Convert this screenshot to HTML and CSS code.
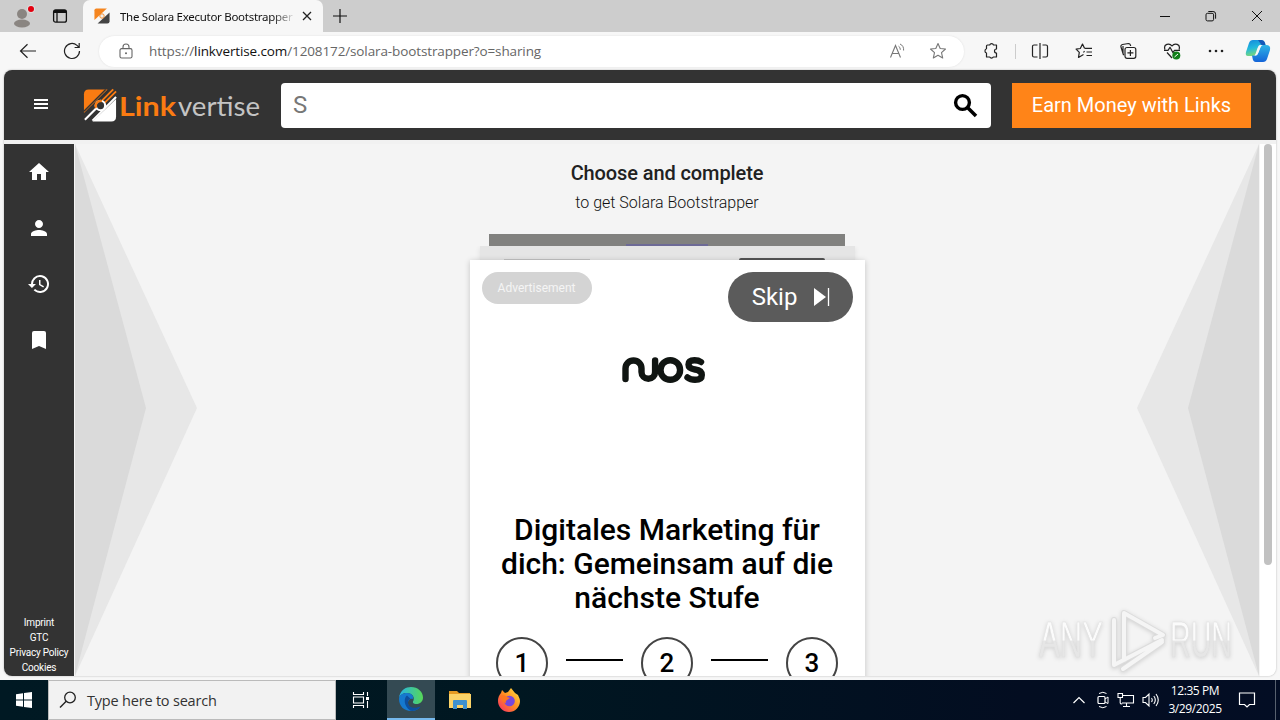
FILE: index.html
```html
<!DOCTYPE html>
<html lang="en">
<head>
<meta charset="utf-8">
<title>The Solara Executor Bootstrapper</title>
<link rel="stylesheet" href="styles.css">
</head>
<body>
<div class="desktop">
  <div class="tabbar">
    <div class="profile">
      <svg width="24" height="28" viewBox="0 0 24 28"><circle cx="11" cy="12" r="5" fill="#8a8581"/><ellipse cx="11" cy="21.500" rx="8" ry="4" fill="#8a8581"/><circle cx="20" cy="7" r="4" fill="#ddd"/><circle cx="20" cy="7" r="3" fill="#e3000f"/></svg>
    </div>
    <svg class="workspaces" width="16" height="16" viewBox="0 0 16 16"><rect x="1.600" y="1.800" width="12.800" height="12.400" rx="2" fill="none" stroke="#111" stroke-width="1.300"/><path d="M2 2h12v3H2z" fill="#111"/><path d="M5 5v9" stroke="#111" stroke-width="1.300"/></svg>
    <div class="tab">
      <svg width="16" height="16" viewBox="0 0 36 36"><use href="#lvmark-dark"/></svg>
      <span class="tab-title">The Solara Executor Bootstrapper</span>
      <svg class="tab-close" width="10" height="10" viewBox="0 0 10 10"><path d="M1 1l8 8M9 1L1 9" stroke="#222" stroke-width="1.300"/></svg>
    </div>
    <svg class="tab-new" width="14" height="14" viewBox="0 0 14 14"><path d="M7 0v14M0 7h14" stroke="#111" stroke-width="1.200"/></svg>
    <div class="window-controls">
      <svg width="12" height="12" viewBox="0 0 12 12"><path d="M1 6.500h10" stroke="#111"/></svg>
      <svg width="12" height="12" viewBox="0 0 12 12"><rect x="1" y="3.300" width="7.600" height="7.600" rx="1.500" fill="none" stroke="#111"/><path d="M3.300 1.500h4.600a2.600 2.600 0 0 1 2.700 2.700v4.500" fill="none" stroke="#111"/></svg>
      <svg width="12" height="12" viewBox="0 0 12 12"><path d="M1 1l10 10M11 1L1 11" stroke="#111"/></svg>
    </div>
  </div>

  <div class="toolbar">
    <svg class="nav-back" width="18" height="16" viewBox="0 0 18 16"><path d="M17 8H2M8.500 1.200L1.500 8l7 6.800" fill="none" stroke="#222" stroke-width="1.200"/></svg>
    <svg class="nav-reload" width="18" height="18" viewBox="0 0 18 18"><path d="M16.500 9A7.500 7.500 0 1 1 14 3.400L16 5.300M16.200 1v4.500h-4.600" fill="none" stroke="#222" stroke-width="1.200"/></svg>
    <div class="address">
      <svg class="lock" width="14" height="16" viewBox="0 0 14 16"><rect x="1" y="5.600" width="12" height="9.400" rx="1.600" fill="none" stroke="#666" stroke-width="1.100"/><path d="M4 5.500V4a3 3 0 0 1 6 0v1.500" fill="none" stroke="#666" stroke-width="1.100"/><circle cx="7" cy="10.300" r="1" fill="#666"/></svg>
      <span class="url">https://<b>linkvertise.com</b>/1208172/solara-bootstrapper?o=sharing</span>
      <svg width="18" height="16" viewBox="0 0 18 16"><path d="M1.500 14.500L6.500 2.500l5 12M3 10.500h7" fill="none" stroke="#777" stroke-width="1.100"/><path d="M9.500 3.200q2 1 1.800 3.600M11 1q4 1.800 3.600 6.500" fill="none" stroke="#777"/></svg>
      <svg class="star" width="18" height="18" viewBox="0 0 18 18"><path d="M9 1.500l2.200 5 5.300.5-4 3.600 1.200 5.400L9 13.200 4.300 16l1.200-5.400-4-3.600 5.300-.5z" fill="none" stroke="#777" stroke-width="1.100" stroke-linejoin="round"/></svg>
    </div>
    <svg class="ext" width="16" height="18" viewBox="0 0 16 18"><path d="M4.500 3h2.200a2 2 0 0 1 3.800 0H13.500v4a2 2 0 0 0 0 4v4h-3.200a2 2 0 0 1-3.600 0H3.500v-4a2.200 2.200 0 0 1 0-4.200V4q0-1 1-1z" fill="none" stroke="#222" stroke-width="1.200" stroke-linejoin="round"/></svg>
    <i class="sep"></i>
    <div class="tools">
      <svg width="18" height="18" viewBox="0 0 18 18"><path d="M6.500 3H3a1.500 1.500 0 0 0-1.500 1.500v9A1.500 1.500 0 0 0 3 15h3.500M11.500 3H15a1.500 1.500 0 0 1 1.500 1.500v9A1.500 1.500 0 0 1 15 15h-3.500M9 1v16" fill="none" stroke="#222" stroke-width="1.200"/></svg>
      <svg width="18" height="18" viewBox="0 0 18 18"><path d="M9.500 6.400H17M11.500 10H17M11.500 13.500H17" stroke="#222" stroke-width="1.200"/><path d="M9.500 6.300L7.500 2 5.300 6.500l-4.200.6 3.200 3.300-.8 5 5-2.900M9.500 9l-1 1.500" fill="none" stroke="#222" stroke-width="1.200" stroke-linejoin="round"/></svg>
      <svg width="18" height="18" viewBox="0 0 18 18"><rect x="6" y="5.500" width="10.800" height="10.800" rx="2" fill="none" stroke="#222" stroke-width="1.200"/><path d="M11.400 7.900v6M8.400 10.900h6M4.500 13L2 5Q1.500 3 3.500 2.500L9.500 1.500q1.700 0 2.200 2.500M4 4v6.500q0 2 1 2.500" fill="none" stroke="#222" stroke-width="1.200"/></svg>
      <svg width="18" height="18" viewBox="0 0 18 18"><path d="M2 7.500C0 2 6.500.5 9 4c2.500-3.500 9-2 7 3.500M1 8.300h4l2-3 3 5.500 1.500-2.500H17M4 10.500L9 16" fill="none" stroke="#222" stroke-width="1.200" stroke-linejoin="round"/><circle cx="13.300" cy="13.500" r="4" fill="#12801a"/><path d="M11.500 15l3.500-3" stroke="#fff"/></svg>
      <svg width="18" height="18" viewBox="0 0 18 18"><g fill="#222"><circle cx="3" cy="9" r="1.300"/><circle cx="9" cy="9" r="1.300"/><circle cx="15" cy="9" r="1.300"/></g></svg>
    </div>
    <svg class="copilot" width="26" height="24" viewBox="0 0 26 24"><defs><linearGradient id="cpa" x1="0" y1="0" x2="0.300" y2="1"><stop offset="0" stop-color="#1587dd"/><stop offset=".55" stop-color="#22b9dc"/><stop offset="1" stop-color="#7bd879"/></linearGradient><linearGradient id="cpb" x1="0" y1="0" x2="0" y2="1"><stop offset="0" stop-color="#2cb4e6"/><stop offset="1" stop-color="#1464d8"/></linearGradient></defs><path d="M8 1h8q3 0 4 3l.5 2h-5q-2 0-3 3l-2 6q-1 2-3 2H3q-3 0-2-4L4 4q1-3 4-3z" fill="url(#cpa)"/><path d="M18 6h3q5 0 4 5l-3 9q-1 3-4 3h-7q-3 0-3.500-4L7 16.500h3.500q2 0 3-3l2-5Q16 6 18 6z" fill="url(#cpb)"/><path d="M14 6.500h3q-2 1-2.500 3.500l-1.500 4q-1 3-3 3 1-1 1.500-3z" fill="#f7f7f7"/><path d="M13 1h3q3 0 4 3l.5 2h-4z" fill="#1457b8"/></svg>
  </div>

  <div class="page">
    <header class="site-header">
      <svg class="menu" width="14" height="10" viewBox="0 0 14 10"><path d="M0 1h14M0 5h14M0 9h14" stroke="#fff" stroke-width="2"/></svg>
      <svg class="logo" width="180" height="40" viewBox="0 0 180 40">
        <defs>
          <g id="lvmark"><path d="M6 1H26L1 26V6q0-5 5-5z" fill="#fa7b12"/><path d="M35 11v19q0 5-5 5H10z" fill="#fff"/><path d="M24 1L1 24" stroke="#333" stroke-width="1.500"/><path d="M32 1L14 19" stroke="#333" stroke-width="5"/><path d="M22 17L5 35" stroke="#333" stroke-width="5"/><path d="M32 1L18 15M35 3L22 16" stroke="#fa7b12" stroke-width="2"/><path d="M17 18L2 33M35 9L10 34" stroke="#fff" stroke-width="2.200"/><circle cx="18.500" cy="18" r="5" fill="#333" stroke="#fff" stroke-width="2.300"/><path d="M14 20.500a5 5 0 0 1 6-7" fill="none" stroke="#fa7b12" stroke-width="2.500"/></g>
          <g id="lvmark-dark"><path d="M5 1H29L1 27V5q0-4 4-4z" fill="#f5851f"/><path d="M35 10v20q0 5-5 5H8z" fill="#444"/><path d="M32 2L4 32" stroke="#f7f7f7" stroke-width="3"/><circle cx="18" cy="18" r="5" fill="#eee" stroke="#f5851f" stroke-width="2"/></g>
        </defs>
        <svg x="3" y="3" width="34" height="35" viewBox="0 0 36 36"><use href="#lvmark"/></svg>
        <text class="logo-link" x="39" y="30.500" textLength="57" lengthAdjust="spacingAndGlyphs">Link</text>
        <text class="logo-vertise" x="98" y="30.500" textLength="82" lengthAdjust="spacingAndGlyphs">vertise</text>
      </svg>
      <div class="search"><span>S</span>
        <svg width="25" height="25" viewBox="0 0 25 25"><circle cx="9.500" cy="9.500" r="6.900" fill="none" stroke="#000" stroke-width="3.400"/><path d="M14.500 14.500l8.500 8.500" stroke="#000" stroke-width="3.600"/></svg>
      </div>
      <div class="earn">Earn Money with Links</div>
    </header>

    <div class="body">
      <nav class="sidebar">
        <div class="side-icons">
          <svg width="24" height="24" viewBox="0 0 24 24"><path d="M10 20v-6h4v6h5v-8h3L12 3 2 12h3v8z"/></svg>
          <svg width="24" height="24" viewBox="0 0 24 24"><path d="M12 12c2.210 0 4-1.790 4-4s-1.790-4-4-4-4 1.790-4 4 1.790 4 4 4zm0 2c-2.670 0-8 1.340-8 4v2h16v-2c0-2.660-5.330-4-8-4z"/></svg>
          <svg width="24" height="24" viewBox="0 0 24 24"><path d="M13 3a9 9 0 0 0-9 9H1l3.890 3.890.07.14L9 12H6a7 7 0 1 1 2.060 4.940l-1.420 1.420A9 9 0 1 0 13 3zm-1 5v5l4.280 2.540.72-1.210-3.500-2.080V8z"/></svg>
          <svg width="24" height="24" viewBox="0 0 24 24"><path d="M17 3H7a2 2 0 0 0-2 2v16l7-3 7 3V5a2 2 0 0 0-2-2z"/></svg>
        </div>
        <div class="legal"><span>Imprint</span><span>GTC</span><span>Privacy Policy</span><span>Cookies</span></div>
      </nav>
      <main class="content">
        <svg class="arrow" width="123" height="532" viewBox="0 0 123 532"><path d="M0 0L122 264 0 532z" fill="#e7e7e7"/><path d="M0 0L71 264 0 532z" fill="#dadada"/></svg>
        <section class="offer">
          <h1>Choose and complete</h1>
          <p>to get Solara Bootstrapper</p>
          <div class="peek peek-far"><i></i></div>
          <div class="peek peek-near"><i class="peek-ad"></i><i class="peek-skip"></i></div>
          <article class="card">
            <div class="card-top">
              <span class="ad">Advertisement</span>
              <span class="skip">Skip <svg width="17" height="18" viewBox="0 0 17 18"><path d="M1 0l12 9-12 9z" fill="#fff"/><path d="M15.500 0v18" stroke="#fff" stroke-width="1.300"/></svg></span>
            </div>
            <svg class="brand" role="img" aria-label="nuos" width="84" height="28" viewBox="0 0 84 28"><g fill="none" stroke="#101512" stroke-width="6.400" stroke-linecap="round"><path d="M3.500 23V12.500a8 8 0 0 1 16 0v3.500a6.800 6.800 0 0 0 13.600 0V4.500"/><circle cx="48.300" cy="14" r="9.800"/><path d="M79 6Q76.500 4.200 72.500 4.200 66.500 4.200 66.500 8.500q0 4 6.500 5 6.800 1 6.800 5.500 0 4.800-6.800 4.800-4.500 0-7.500-2.300"/></g></svg>
            <h2>Digitales Marketing für dich: Gemeinsam auf die nächste Stufe</h2>
            <div class="steps"><b>1</b><i></i><b>2</b><i></i><b>3</b></div>
          </article>
        </section>
        <svg class="arrow" width="123" height="532" viewBox="0 0 123 532"><path d="M123 0L1 264l122 268z" fill="#e7e7e7"/><path d="M123 0L52 264l71 268z" fill="#dadada"/></svg>
        <svg class="watermark" width="206" height="74" viewBox="0 0 206 74">
          <defs><linearGradient id="wm" x1="0" y1="0" x2="0" y2="1"><stop offset=".5" stop-color="#fbfbfb"/><stop offset=".52" stop-color="#e6e6e6"/></linearGradient></defs>
          <g class="wm-text"><text x="7" y="55" textLength="64" lengthAdjust="spacingAndGlyphs">ANY</text><text x="138" y="55" textLength="62" lengthAdjust="spacingAndGlyphs">RUN</text></g>
          <g fill="none" stroke-linejoin="round" stroke-linecap="round"><path d="M82 18v45l48-25M92 58V11l39 22-8 3M91 67l39-27" stroke="#dcdcdc" stroke-width="6"/><path d="M82 18v45l48-25M92 58V11l39 22-8 3M91 67l39-27" stroke="#f5f5f5" stroke-width="4"/></g>
        </svg>
      </main>
      <div class="scroll"><i></i></div>
    </div>
  </div>

  <div class="taskbar">
    <div class="start"><svg width="16" height="16" viewBox="0 0 16 16"><path d="M0 2.200l7-1v6.400H0zM8 1l8-1v7.600H8zM0 8.500h7v6.300l-7-1zM8 8.500h8V16l-8-1.100z" fill="#fff"/></svg></div>
    <div class="find"><svg width="18" height="18" viewBox="0 0 18 18"><circle cx="11" cy="6.500" r="5.300" fill="none" stroke="#222" stroke-width="1.300"/><path d="M7.200 10.300L1 16.500" stroke="#222" stroke-width="1.400"/></svg><span>Type here to search</span></div>
    <div class="task"><svg width="18" height="18" viewBox="0 0 18 18"><path d="M1.500 1v2.500h10V1M1.500 17v-2.500h10V17M1.500 6h10v6h-10zM15.500 1v4M15.500 10v7" fill="none" stroke="#fff" stroke-width="1.100"/><rect x="14" y="6" width="3" height="3" fill="#fff"/></svg></div>
    <div class="task active"><svg width="26" height="26" viewBox="0 0 26 26"><defs><linearGradient id="eg" x1="0" y1="0" x2="1" y2="0"><stop offset="0" stop-color="#26b3e5"/><stop offset="1" stop-color="#57d857"/></linearGradient></defs><path d="M1 12C2 4 8 1 13 1c7 0 12 5 12 10.500 0 4-3 6.500-6.500 6.500-3 0-4.500-1.500-3-3.500C17 10 13 7 9 7s-7 2-8 5z" fill="url(#eg)"/><path d="M1 13c0-4 4-6 8-6 4.500 0 7 3 6 6-3-1-5 1-5 4 0 5 5 7 12 4-2 2.500-5 4-9 4C6 25 1 20 1 13z" fill="#1579ce"/><path d="M9 9.500c-3 2-4 10 3.500 15.300C18 25.500 22 22 22.500 20.500 14 24 10 20 10 16.500c0-2 1-3.500 2.500-3.800z" fill="#0d4f9e"/></svg></div>
    <div class="task"><svg width="22" height="20" viewBox="0 0 22 20"><path d="M0 1h8l2 2h11v5H0z" fill="#e59b23"/><rect y="4" width="22" height="14" fill="#fbd368"/><path d="M4 19v-8q0-1 1-1h12q1 0 1 1v8h-4v-4H8v4z" fill="#3e91cf"/></svg></div>
    <div class="task"><svg width="24" height="24" viewBox="0 0 24 24"><defs><linearGradient id="fg" x1="1" y1="0" x2="0" y2="1"><stop offset="0" stop-color="#ffe943"/><stop offset=".5" stop-color="#ff8b22"/><stop offset="1" stop-color="#f9266c"/></linearGradient></defs><path d="M4 5l1-3 3 3 3-1 3-4 4 5 3 2q2 4 2 6a11 11 0 0 1-22 0Q1 8 4 5z" fill="url(#fg)"/><circle cx="12.500" cy="13" r="5.300" fill="#7747dc"/><path d="M3 8q4-2 7 1l3 1-3 2q-2 1-1 3-4-1-4-4z" fill="#ff7621"/></svg></div>
    <div class="tray">
      <svg width="12" height="8" viewBox="0 0 12 8"><path d="M.5 7L6 1.500 11.500 7" fill="none" stroke="#fff" stroke-width="1.200"/></svg>
      <svg width="14" height="18" viewBox="0 0 14 18"><rect x="2" y="5.500" width="7" height="7" rx="1" fill="none" stroke="#fff" stroke-width="1.200"/><path d="M9 8l3-2v6.500L9 11M3 2.500q4-2.500 7.500 0M3 15.500q4 2.500 7.500 0" fill="none" stroke="#fff"/></svg>
      <svg width="18" height="16" viewBox="0 0 18 16"><path d="M6 3.500h10.500v7.500H5M9.500 11v3M6 14.500h7M1 1.500h4.500v4H1zM3.200 5.500V11q0 1 2 1" fill="none" stroke="#fff" stroke-width="1.100"/></svg>
      <svg width="18" height="16" viewBox="0 0 18 16"><path d="M1 5.500h2.500L7 2v12l-3.500-3.500H1zM9.500 6q1.500 2 0 4M11.800 4q3 4 0 8M14 2q4.500 6 0 12" fill="none" stroke="#fff" stroke-width="1.100"/></svg>
      <div class="clock"><span>12:35 PM</span><span>3/29/2025</span></div>
      <svg class="notes" width="18" height="18" viewBox="0 0 18 18"><path d="M1.500 2h15v11.500h-5L9 16l-2.500-2.500h-5z" fill="none" stroke="#fff" stroke-width="1.200"/></svg>
      <i class="peek-desktop"></i>
    </div>
  </div>
</div>
</body>
</html>
```
FILE: styles.css
```css
* { box-sizing: border-box; }
body { margin: 0; font-family: Roboto, "Liberation Sans", sans-serif; }
svg { display: block; flex: none; }
.desktop { width: 1280px; height: 720px; display: flex; flex-direction: column; background: #f7f7f7; overflow: hidden; }

/* browser chrome */
.tabbar { height: 32px; flex: none; display: flex; align-items: center; background: #cdcdcd; font-family: "Noto Sans", "Open Sans", sans-serif; }
.profile { width: 51px; padding-left: 11px; }
.workspaces { margin: 0 15px 0 1px; }
.tab { width: 240px; height: 32px; padding: 0 11px; background: #f7f7f7; border-radius: 7px 7px 0 0; display: flex; align-items: center; }
.tab-title { width: 176px; margin: 0 7px 0 10px; font-size: 11.5px; letter-spacing: -0.28px; white-space: nowrap; color: #111; -webkit-mask-image: linear-gradient(90deg, #000 152px, transparent 176px); mask-image: linear-gradient(90deg, #000 152px, transparent 176px); }
.tab-new { margin-left: 10px; }
.window-controls { margin-left: auto; display: flex; gap: 34px; padding-right: 17px; }

.toolbar { height: 38px; flex: none; display: flex; align-items: center; background: #f7f7f7; }
.nav-back { margin-left: 19px; }
.nav-reload { margin-left: 26px; }
.address { margin-left: 18px; width: 865px; height: 31px; border-radius: 16px; background: #fff; box-shadow: 0 0 2px #ddd; display: flex; align-items: center; padding: 0 17px 0 20px; }
.url { margin: 0 auto 0 16px; font: 13.5px "Open Sans", "Noto Sans", sans-serif; letter-spacing: -0.12px; color: #666; white-space: nowrap; }
.url b { font-weight: 400; color: #111; }
.star { margin-left: 22px; }
.ext { margin-left: 19px; }
.sep { width: 1px; height: 15px; background: #ccc; margin-left: 16px; }
.tools { display: flex; gap: 26px; margin-left: 15px; }
.copilot { margin-left: 20px; }

/* site */
.page { width: 1272px; height: 606px; margin: 0 4px; flex: none; display: flex; flex-direction: column; gap: 4px; border-radius: 8px; overflow: hidden; background: #f1f1f1; box-shadow: 0 0 2px #aaa; }
.site-header { height: 70px; flex: none; background: #333; display: flex; align-items: center; padding: 0 25px 0 30px; }
.menu { margin-top: -2px; }
.logo { margin-left: 32px; margin-right: 21px; overflow: visible; }
.logo-link { font: 700 27px Lato, sans-serif; fill: #fa7b12; }
.logo-vertise { font: 400 27px Lato, sans-serif; fill: #c4c4c4; }
.search { width: 710px; height: 45px; background: #fff; border-radius: 4px; display: flex; align-items: center; justify-content: space-between; padding: 0 13px 0 12px; font-size: 24px; color: #777; }
.earn { width: 239px; height: 45px; margin-left: auto; background: #ff8418; color: #fff; font-size: 20px; line-height: 45px; text-align: center; white-space: nowrap; }
.body { flex: 1; display: flex; min-height: 0; }
.sidebar { width: 70px; background: #333; display: flex; flex-direction: column; justify-content: space-between; padding-top: 16px; }
.side-icons { display: flex; flex-direction: column; align-items: center; gap: 32px; fill: #fff; }
.legal { display: flex; flex-direction: column; align-items: center; font-size: 10px; letter-spacing: -0.2px; line-height: 15px; color: #fff; padding-bottom: 1px; white-space: nowrap; }
.content { position: relative; width: 1186px; display: flex; justify-content: space-between; background: #f4f4f4; padding: 0 1px 0 1px; overflow: hidden; }
.scroll { width: 16px; background: #fff; padding-left: 4px; }
.scroll i { display: block; width: 8px; height: 421px; border-radius: 4px; background: #c1c1c1; }

/* offer */
.offer { width: 395px; display: flex; flex-direction: column; align-items: center; }
.offer h1 { margin: 17px 0 0; font-size: 20px; line-height: 24px; font-weight: 500; letter-spacing: -0.1px; color: #212121; }
.offer p { margin: 8px 0 0; font-size: 16px; line-height: 20px; font-weight: 300; color: #111; }
.peek { flex: none; display: flex; }
.peek-far { width: 356px; height: 12px; margin-top: 21px; background: #81817f; justify-content: center; align-items: flex-end; }
.peek-far i { width: 82px; height: 2px; background: #6d6a96; }
.peek-near { width: 375px; height: 14px; background: #e5e5e5; justify-content: space-between; align-items: flex-end; padding: 0 30px 0 24px; box-shadow: 0 2px 5px #ddd; clip-path: inset(0 -8px); }
.peek-ad { width: 86px; height: 1px; background: #c3c3c3; }
.peek-skip { width: 86px; height: 2px; background: #555; border-radius: 8px 8px 0 0; }
.card { width: 395px; height: 500px; flex: none; background: #fff; box-shadow: 0 1px 6px rgba(0,0,0,.2); display: flex; flex-direction: column; align-items: center; position: relative; }
.card-top { width: 100%; display: flex; justify-content: space-between; padding: 12px 12px 0; }
.ad { width: 110px; height: 32px; border-radius: 16px; background: #d4d4d4; color: #f5f5f5; font-size: 12px; line-height: 32px; text-align: center; }
.skip { width: 125px; height: 50px; border-radius: 25px; background: #5b5b5b; color: #fff; font-size: 24px; display: flex; align-items: center; justify-content: center; gap: 16px; padding-left: 2px; }
.brand { margin: 34px 6px 0 0; }
.card h2 { width: 345px; margin: 129px 0 0; font-size: 30px; line-height: 34px; font-weight: 500; text-align: center; color: #000; }
.steps { width: 342px; margin-top: 22px; display: flex; align-items: center; justify-content: space-between; }
.steps b { width: 52px; height: 52px; border: 2px solid #444; border-radius: 50%; font-size: 26px; font-weight: 500; line-height: 48px; text-align: center; }
.steps i { width: 57px; height: 2px; background: #000; margin-top: -6px; }
.watermark { position: absolute; right: 22px; bottom: 0; filter: drop-shadow(0 1px 2px rgba(0,0,0,.15)); }
.wm-text { font: 400 50px "Liberation Sans", sans-serif; fill: url(#wm); stroke: #dedede; stroke-width: 0.6; }

/* taskbar */
.taskbar { height: 40px; margin-top: 4px; flex: none; display: flex; background: linear-gradient(90deg, #001923 0, #001721 40%, #030d21 80%, #030d24 100%); font-family: "Open Sans", "Noto Sans", sans-serif; }
.start { width: 48px; display: grid; place-items: center; }
.find { width: 288px; background: #f2f2f2; border: 1px solid #bbb; display: flex; align-items: center; gap: 10px; padding-left: 10px; font-size: 14.5px; letter-spacing: -0.2px; color: #333; white-space: nowrap; }
.task { width: 48px; display: grid; place-items: center; }
.task + .task { margin-left: 1px; }
.find + .task { width: 50px; }
.active { background: #344a53; border-bottom: 2px solid #76b9ed; }
.tray { margin-left: auto; display: flex; align-items: center; }
.tray svg { margin-right: 7px; }
.tray svg:first-child { margin-right: 11px; }
.clock { width: 64px; display: flex; flex-direction: column; align-items: center; color: #fff; font-size: 12px; letter-spacing: -0.4px; line-height: 18px; margin-left: -4px; }
.tray .notes { margin: 0 19px 0 11px; }
.peek-desktop { width: 5px; height: 40px; border-left: 1px solid #57606e; }
```
